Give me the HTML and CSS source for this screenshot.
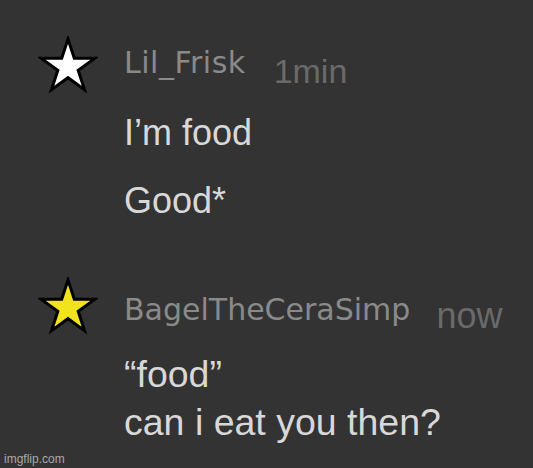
FILE: index.html
```html
<!DOCTYPE html>
<html lang="en">
<head>
    <title>Comments</title>
    <link rel="stylesheet" href="styles.css">
</head>
<body>

    <div class="thread">
        <div class="comment first">
            <svg class="avatar" width="60" height="60" viewBox="0 0 60 60">
                <polygon class="star white" points="30,3 36.29,22.34 56.63,22.35 40.18,34.31 46.46,53.65 30,41.7 13.54,53.65 19.82,34.31 3.37,22.35 23.71,22.34"/>
            </svg>
            <div class="body">
                <div class="head">
                    <span class="user">Lil_Frisk</span>
                    <span class="time">1min</span>
                </div>
                <div class="msg">
                    <div>I’m food</div>
                    <div>Good*</div>
                </div>
            </div>
        </div>

        <div class="comment second">
            <svg class="avatar" width="60" height="60" viewBox="0 0 60 60">
                <polygon class="star yellow" points="30,3 36.29,22.34 56.63,22.35 40.18,34.31 46.46,53.65 30,41.7 13.54,53.65 19.82,34.31 3.37,22.35 23.71,22.34"/>
            </svg>
            <div class="body">
                <div class="head">
                    <span class="user">BagelTheCeraSimp</span>
                    <span class="time">now</span>
                </div>
                <div class="msg">
                    <div>“food”</div>
                    <div>can i eat you then?</div>
                </div>
            </div>
        </div>
    </div>

    <div class="mark">imgflip.com</div>

</body>
</html>
```

FILE: styles.css
```css
body {
    margin: 0;
    background: #333333;
    font-family: "Liberation Sans", Arial, sans-serif;
    width: 533px;
    height: 468px;
    overflow: hidden;
    position: relative;
}
.thread {
    padding-top: 36px;
}
.comment {
    display: flex;
    align-items: flex-start;
    padding-left: 38px;
}
.avatar {
    flex: none;
    display: block;
}
.star {
    stroke: #000;
    stroke-width: 3;
    stroke-linejoin: miter;
}
.white {
    fill: #ffffff;
}
.yellow {
    fill: #f2e41c;
}
.body {
    margin-left: 26px;
}
.head {
    display: flex;
    align-items: flex-start;
}
.user {
    font-family: "DejaVu Sans", Verdana, sans-serif;
    font-size: 30px;
    line-height: 36px;
    color: #8a8a8a;
}
.time {
    font-size: 34px;
    line-height: 40px;
    color: #6a6a6a;
}
.msg {
    color: #d8d8d8;
}

.first .body {
    padding-top: 9px;
}
.first .user {
    letter-spacing: 0.5px;
}
.first .time {
    margin-left: 28px;
    margin-top: 6px;
}
.first .msg {
    margin-top: 8px;
    font-size: 36px;
    line-height: 68px;
}

.second {
    margin-top: 42px;
}
.second .body {
    padding-top: 15px;
}
.second .time {
    font-size: 36px;
    margin-left: 26px;
    margin-top: 4px;
}
.second .msg {
    margin-top: 14px;
    font-size: 37.5px;
    line-height: 48px;
}

.mark {
    position: absolute;
    left: 4px;
    bottom: 3px;
    font-size: 12px;
    line-height: 12px;
    color: #a8a8a8;
}
```
